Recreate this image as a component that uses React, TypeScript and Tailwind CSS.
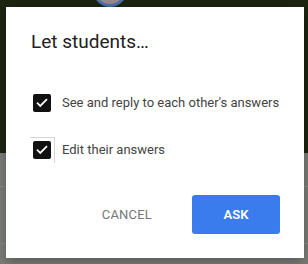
import React from "react";

function Check({ ring }: { ring?: boolean }) {
  return (
    <span className="relative flex h-[18px] w-[18px] shrink-0 items-center justify-center rounded-[2px] bg-[#111]">
      {ring && (
        <span className="absolute left-[-3px] top-[-4px] h-[26px] w-[25px] border-t border-r border-[#d6d6d6]" />
      )}
      <svg width="14" height="14" viewBox="0 0 24 24" fill="none">
        <path d="M4.5 12.5l4.5 4.5L19.5 6.5" stroke="#fff" strokeWidth="3" strokeLinecap="square" />
      </svg>
    </span>
  );
}

export default function App() {
  const options = ["See and reply to each other's answers", "Edit their answers"];

  return (
    <div className="relative h-[264px] w-[308px] overflow-hidden font-['Roboto',sans-serif]">
      {/* page behind the dialog */}
      <div className="flex h-full flex-col">
        <div className="h-[153px] bg-[#1d2511]" />
        <div className="flex flex-1 flex-col bg-[#7c7e79]">
          <div className="h-[33px]" />
          <div className="h-px bg-[#8c8e89]" />
          <div className="h-[56px]" />
          <div className="h-px bg-[#8a8c87]" />
        </div>
      </div>
      <div className="absolute left-[93px] top-[-27px] h-[34px] w-[34px] rounded-full border-[3px] border-[#4b72ad] bg-[#9a8a8c]" />

      {/* dialog */}
      <div className="absolute left-[6px] top-[7px] flex h-[251px] w-[298px] flex-col bg-white pl-[25px] pr-[24px] pt-[23px] pb-[24px] shadow-[0_4px_12px_rgba(0,0,0,0.3)]">
        <h1 className="text-[19px] leading-[24px] text-[#212121]">Let students…</h1>
        <div className="mt-[37px] flex flex-col gap-[23px] pl-[2px]">
          {options.map((o, i) => (
            <label key={o} className="flex h-[24px] items-center gap-[11px] whitespace-nowrap">
              <Check ring={i === 1} />
              <span className="text-[13px] text-[#444]">{o}</span>
            </label>
          ))}
        </div>
        <div className="mt-[33px] flex items-center justify-end gap-[40px]">
          <button className="text-[13px] tracking-[0.2px] text-[#777]">CANCEL</button>
          <button className="h-[39px] w-[88px] rounded-[3px] bg-[#3a7ced] text-[13px] font-semibold text-white">
            ASK
          </button>
        </div>
      </div>
    </div>
  );
}
